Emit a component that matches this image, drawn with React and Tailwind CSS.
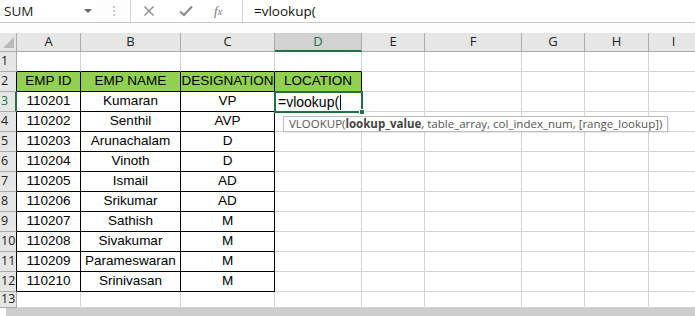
import React from 'react';

const cols = [
    { key: 'A', w: 'w-[64px]' },
    { key: 'B', w: 'w-[100px]' },
    { key: 'C', w: 'w-[94px]' },
    { key: 'D', w: 'w-[87px]' },
    { key: 'E', w: 'w-[63px]' },
    { key: 'F', w: 'w-[97px]' },
    { key: 'G', w: 'w-[63px]' },
    { key: 'H', w: 'w-[64px]' },
    { key: 'I', w: 'w-[50px]' },
];

const employees = [
    ['110201', 'Kumaran', 'VP'],
    ['110202', 'Senthil', 'AVP'],
    ['110203', 'Arunachalam', 'D'],
    ['110204', 'Vinoth', 'D'],
    ['110205', 'Ismail', 'AD'],
    ['110206', 'Srikumar', 'AD'],
    ['110207', 'Sathish', 'M'],
    ['110208', 'Sivakumar', 'M'],
    ['110209', 'Parameswaran', 'M'],
    ['110210', 'Srinivasan', 'M'],
];

const uiFont = "font-['Open_Sans','Noto_Sans',sans-serif]";
const cellFont = "font-['Liberation_Sans',Arial,sans-serif]";

const FormulaBar = () => (
    <div className={`flex h-[23px] bg-[#fdfdfd] border-b border-[#c6c6c6] ${uiFont}`}>
        <div className="w-[97px] shrink-0 flex items-center justify-between pl-[4px] pr-[5px] bg-white text-[13.5px] text-[#222]">
            <span>SUM</span>
            <span className="w-0 h-0 border-l-[4px] border-r-[4px] border-t-[4px] border-l-transparent border-r-transparent border-t-[#666]" />
        </div>
        <div className="w-[33px] shrink-0 flex items-center justify-center">
            <div className="flex flex-col gap-[2px]">
                <span className="w-[2px] h-[2px] bg-[#c8c8c8]" />
                <span className="w-[2px] h-[2px] bg-[#c8c8c8]" />
                <span className="w-[2px] h-[2px] bg-[#c8c8c8]" />
            </div>
        </div>
        <div className="w-[113px] shrink-0 flex items-center bg-white border-l border-r border-[#d4d4d4]">
            <svg className="ml-[12px]" width="12" height="12" viewBox="0 0 12 12">
                <path d="M1.5 1.5 L10.5 10.5 M10.5 1.5 L1.5 10.5" stroke="#8a8a8a" strokeWidth="1.4" />
            </svg>
            <svg className="ml-[24px]" width="14" height="12" viewBox="0 0 14 12">
                <path d="M1 6.5 L5 10 L13 1.5" stroke="#8a8a8a" strokeWidth="2" fill="none" />
            </svg>
            <span className="ml-[21px] text-[13px] italic text-[#777] font-['Liberation_Serif',serif]">
                f<span className="text-[10px]">x</span>
            </span>
        </div>
        <div className="flex-1 flex items-center pl-[11px] bg-white text-[13.5px] text-[#111]">
            =vlookup(
        </div>
    </div>
);

const ColumnHeader = () => (
    <div className={`flex h-[19px] bg-[#e6e6e6] text-[13px] text-[#222] ${uiFont}`}>
        <div className="w-[17px] shrink-0 h-full border-r border-b border-[#ababab] relative">
            <svg className="absolute right-[2px] bottom-[3px]" width="11" height="11" viewBox="0 0 11 11">
                <path d="M11 0 L11 11 L0 11 Z" fill="#b9b9b9" />
            </svg>
        </div>
        {cols.map((c) =>
            c.key === 'D' ? (
                <div key={c.key} className={`${c.w} shrink-0 h-full flex items-center justify-center bg-[#d2d2d2] border-r border-[#ababab] border-b-2 border-b-[#217346] text-[#217346]`}>
                    {c.key}
                </div>
            ) : (
                <div key={c.key} className={`${c.w} shrink-0 h-full flex items-center justify-center border-r border-b border-[#ababab]`}>
                    {c.key}
                </div>
            )
        )}
    </div>
);

const RowHead = ({ n, black, active }) => (
    <div
        className={`w-[17px] shrink-0 h-full flex items-center bg-[#e6e6e6] text-[12.5px] pl-[1px] ${uiFont} border-b border-[#ababab] ${
            active ? 'border-r-2 border-r-[#217346] bg-[#d2d2d2] text-[#217346]' : black ? 'border-r border-r-black text-[#222]' : 'border-r border-r-[#ababab] text-[#222]'
        }`}
    >
        {n}
    </div>
);

const Cell = ({ w, children, className = '' }) => (
    <div className={`${w} shrink-0 h-full flex items-center justify-center border-r border-b border-[#d4d4d4] text-[13.5px] text-black ${cellFont} ${className}`}>
        {children}
    </div>
);

const emptyTail = (from, extra = {}) =>
    cols.slice(from).map((c) => <Cell key={c.key} w={c.w} className={extra[c.key] || ''} />);

const App = () => {
    return (
        <div className="w-[695px] h-[316px] overflow-hidden bg-white relative">
            <FormulaBar />
            <div className="h-[10px] bg-[#fdfdfd]" />
            <ColumnHeader />

            {/* row 1 */}
            <div className="flex h-[20px]">
                <RowHead n="1" />
                {emptyTail(0, {
                    A: 'border-b-black',
                    B: 'border-b-black',
                    C: 'border-b-black',
                    D: 'border-b-black',
                })}
            </div>

            {/* row 2 - headers */}
            <div className="flex h-[20px]">
                <RowHead n="2" black />
                {['EMP ID', 'EMP NAME', 'DESIGNATION', 'LOCATION'].map((t, i) => (
                    <Cell key={t} w={cols[i].w} className="bg-[#92d050] border-r-black border-b-black">
                        {t}
                    </Cell>
                ))}
                {emptyTail(4)}
            </div>

            {employees.map((e, idx) => {
                const rowNum = idx + 3;
                return (
                    <div key={e[0]} className="flex h-[20px]">
                        <RowHead n={String(rowNum)} black={rowNum !== 3} active={rowNum === 3} />
                        {e.map((v, i) => (
                            <Cell key={i} w={cols[i].w} className="border-r-black border-b-black">
                                {v}
                            </Cell>
                        ))}
                        {rowNum === 3 ? (
                            <div className="w-[87px] shrink-0 h-full border-r border-b border-[#d4d4d4] relative">
                                <div className="absolute -left-[1px] -top-[1px] w-[89px] h-[22px] border-2 border-[#217346] flex items-center pl-[2px]">
                                    <span className={`text-[14px] text-black ${cellFont}`}>=vlookup(</span>
                                    <span className="w-[1px] h-[15px] bg-black ml-[1px]" />
                                </div>
                                <span className="absolute right-[-4px] bottom-[-4px] w-[6px] h-[6px] bg-[#217346] border border-white" />
                            </div>
                        ) : (
                            <Cell w="w-[87px]" />
                        )}
                        {emptyTail(4)}
                        {rowNum === 4 && (
                            <div className={`absolute left-[283px] top-[116px] h-[16px] bg-white border border-[#bdbdbd] flex items-center pl-[5px] pr-[5px] text-[11.5px] text-[#555] whitespace-nowrap ${uiFont} shadow-[1px_1px_1px_rgba(0,0,0,0.08)]`}>
                                VLOOKUP(<span className="font-bold text-[#444]">lookup_value</span>, table_array, col_index_num, [range_lookup])
                            </div>
                        )}
                    </div>
                );
            })}

            {/* row 13 */}
            <div className="flex h-[16px]">
                <RowHead n="13" />
                {emptyTail(0)}
            </div>

            {/* scrollbar */}
            <div className="flex h-[10px] bg-[#f0f0f0]">
                <div className="w-[6px] bg-white" />
                <div className="flex-1 bg-[#cdcdcd]" />
            </div>
        </div>
    );
};

export default App;
